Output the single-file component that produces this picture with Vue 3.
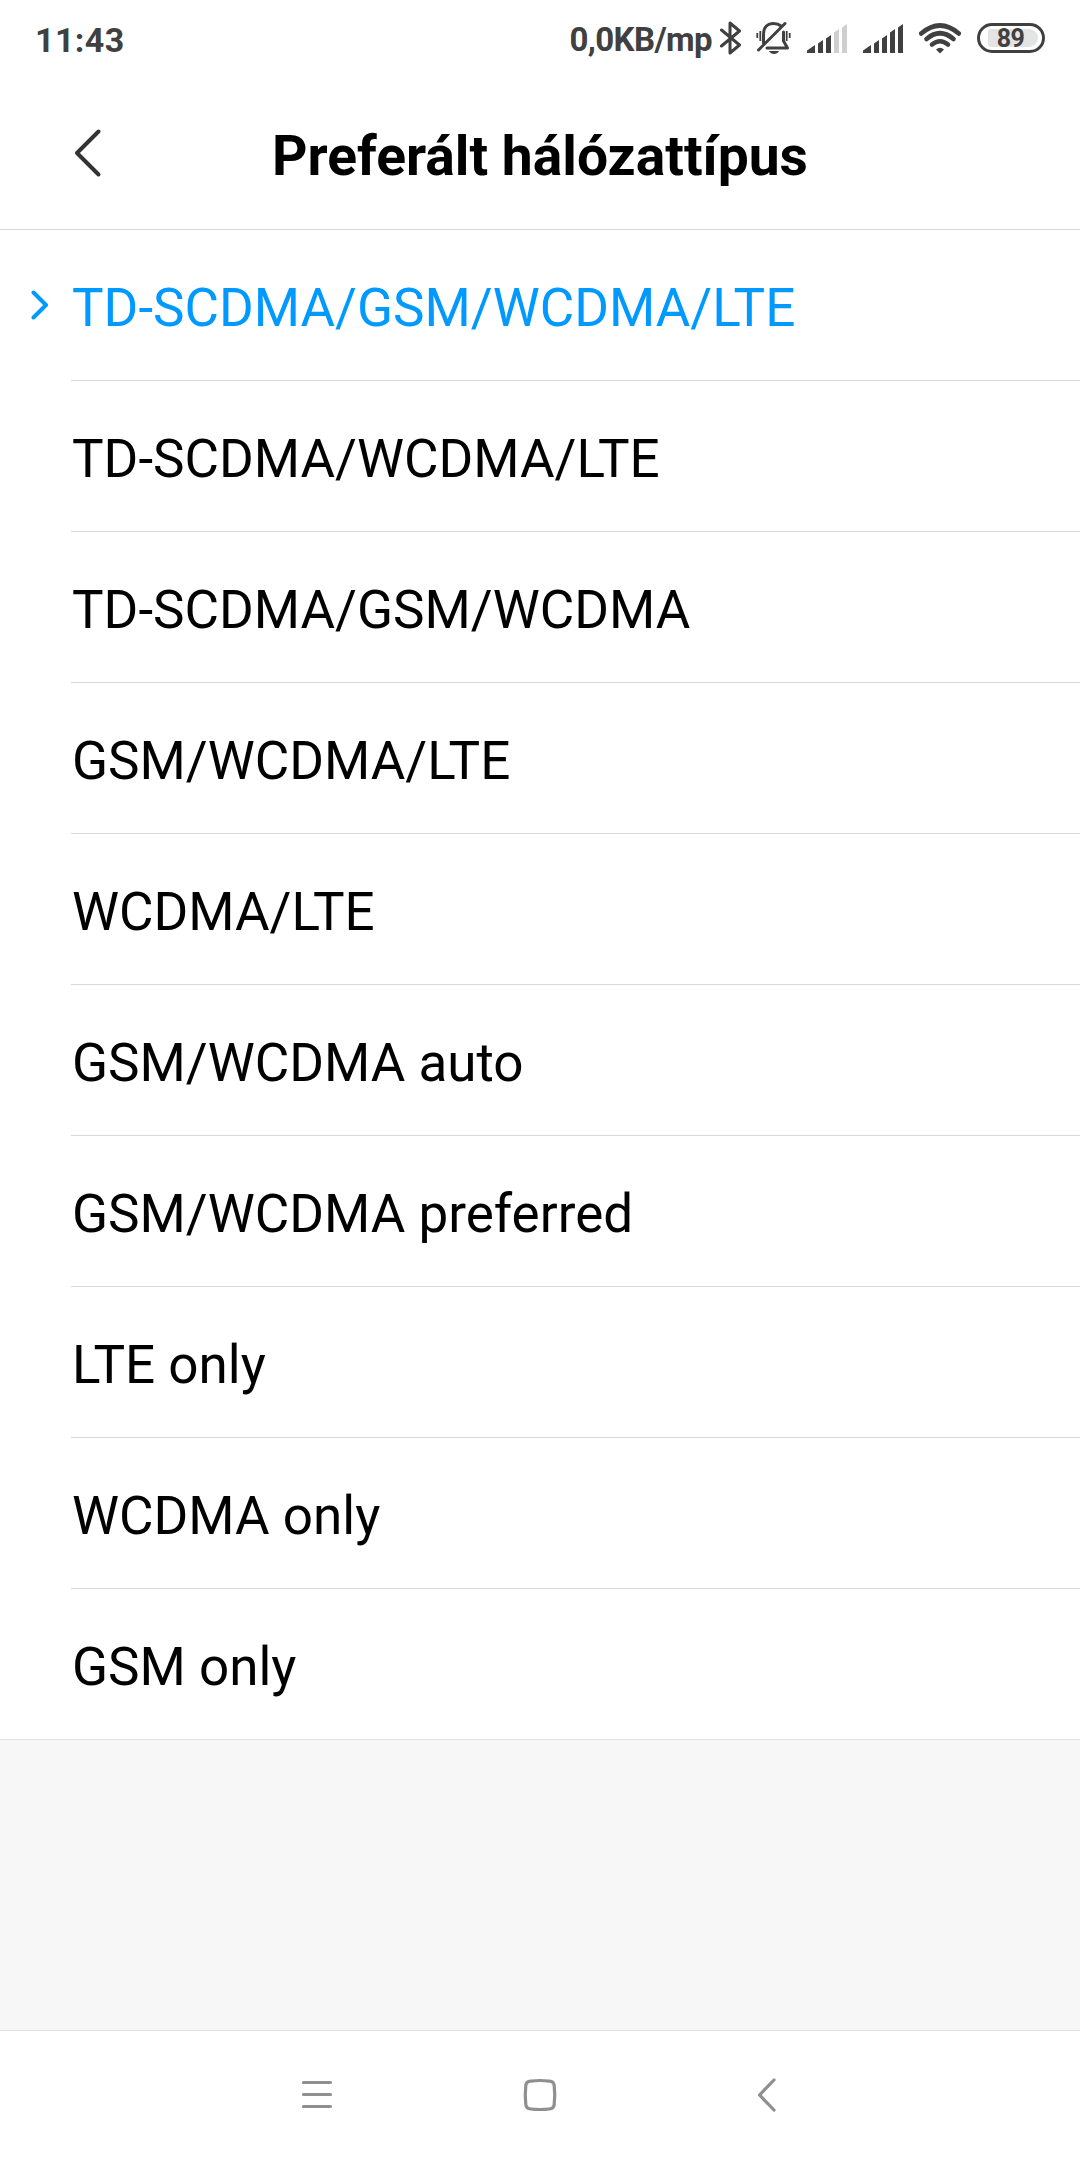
<script setup>
const options = [
  'TD-SCDMA/GSM/WCDMA/LTE',
  'TD-SCDMA/WCDMA/LTE',
  'TD-SCDMA/GSM/WCDMA',
  'GSM/WCDMA/LTE',
  'WCDMA/LTE',
  'GSM/WCDMA auto',
  'GSM/WCDMA preferred',
  'LTE only',
  'WCDMA only',
  'GSM only',
]
const selected = 0
const bars = [
  'M0 29V26.5L8 21V29Z',
  'M11 29V19.5L16 16V29Z',
  'M19 29V14.5L24 11V29Z',
  'M27 29V8.5L32 5V29Z',
  'M35 29V3.5L40 0V29Z',
]
const signals = [3, 5]
</script>

<template>
  <div class="screen">
    <div class="status">
      <span class="time">11:43</span>
      <div class="indicators">
        <span class="speed">0,0KB/mp</span>
        <svg class="bluetooth" width="22" height="34" viewBox="0 0 22 34">
          <path d="M1.5 9L19.500 24L10 32V2L19.500 10L1.5 25" />
        </svg>
        <svg class="bell" width="35" height="34" viewBox="0 0 35 34">
          <path d="M7.500 22V13C7.500 6 12 2.500 17.500 2.500C20.500 2.500 23 3.300 25 5" />
          <path d="M27.500 11V20L31.500 27H11" />
          <path d="M2.500 29L29 2.500" />
          <path class="thin" d="M1.300 12V17M4.300 10V20M30.700 10V20M33.700 12V17" />
          <path class="solid" d="M13 30H23Q21.500 33 18 33T13 30Z" />
        </svg>
        <svg v-for="(level, n) in signals" :key="n" class="signal" width="40" height="29" viewBox="0 0 40 29">
          <path v-for="(bar, i) in bars" :key="i" :d="bar" :class="{ off: i >= level }" />
        </svg>
        <svg class="wifi" width="42" height="31" viewBox="0 0 42 31">
          <path d="M2.200 10.500Q21 -5.500 39.800 10.500" />
          <path d="M7.500 16Q21 4.500 34.500 16" />
          <path d="M13 21.500Q21 15 29 21.500" />
          <path class="solid" d="M17 26.500Q21 23 25 26.500L21 30.500Z" />
        </svg>
        <div class="battery"><span class="charge">89</span></div>
      </div>
    </div>

    <header class="header">
      <svg class="back" width="28" height="50" viewBox="0 0 28 50">
        <path d="M24.500 3.500L3 25L24.500 46.500" />
      </svg>
      <h1>Preferált hálózattípus</h1>
    </header>

    <ul class="list">
      <li v-for="(option, i) in options" :key="option" :class="{ active: i === selected }">
        <div class="marker">
          <svg v-if="i === selected" width="18" height="30" viewBox="0 0 18 30">
            <path d="M2.500 2.500L15 15L2.500 27.500" />
          </svg>
        </div>
        <span class="label">{{ option }}</span>
      </li>
    </ul>

    <div class="filler"></div>

    <nav class="nav">
      <svg width="36" height="36" viewBox="0 0 36 36">
        <path d="M4.500 5.500H31.500M4.500 17.500H31.500M4.500 29.500H31.500" />
      </svg>
      <svg width="36" height="36" viewBox="0 0 36 36">
        <path d="M8.500 4.200Q18 2.800 27.500 4.200Q31.800 4.600 32.200 8.500Q33.300 18 32.200 27.500Q31.800 31.500 27.500 32Q18 33 8.500 32Q4.200 31.500 3.800 27.500Q2.700 18 3.800 8.500Q4.200 4.600 8.500 4.200Z" />
      </svg>
      <svg width="36" height="36" viewBox="0 0 36 36">
        <path d="M29 3L14.500 18L29 33" />
      </svg>
    </nav>
  </div>
</template>

<style>
body {
  margin: 0;
  background: #fff;
}
</style>

<style scoped>
.screen {
  display: flex;
  flex-direction: column;
  width: 1080px;
  height: 2160px;
  overflow: hidden;
  background: #fff;
  color: #000;
  font-family: Roboto, sans-serif;
}
svg {
  display: block;
  flex: none;
  fill: none;
  stroke-linecap: round;
  stroke-linejoin: round;
}
.status {
  display: flex;
  justify-content: space-between;
  align-items: center;
  box-sizing: border-box;
  height: 76px;
  padding: 0 35px 0 35px;
  color: #404040;
  font-weight: 700;
}
.time {
  font-size: 34px;
  line-height: 40px;
  letter-spacing: 0.4px;
  margin-top: 3px;
}
.indicators {
  display: flex;
  align-items: center;
  white-space: nowrap;
}
.speed {
  font-size: 33px;
  line-height: 40px;
  letter-spacing: -0.6px;
  margin: 3px 8px 0 0;
}
.bluetooth {
  stroke: #404040;
  stroke-width: 3;
  margin-right: 14px;
}
.bell {
  stroke: #404040;
  stroke-width: 3;
  margin-right: 16px;
}
.bell .thin {
  stroke-width: 1.8;
  stroke-linecap: butt;
}
.bell .solid,
.wifi .solid {
  fill: #404040;
  stroke: none;
}
.signal {
  fill: #404040;
  margin-right: 16px;
}
.signal .off {
  fill: #cfcfcf;
}
.wifi {
  stroke: #404040;
  stroke-width: 4.6;
  margin-right: 16px;
}
.battery {
  box-sizing: border-box;
  width: 68px;
  height: 30px;
  padding: 3px;
  border: 3px solid #404040;
  border-radius: 15px;
  display: flex;
  justify-content: center;
}
.charge {
  width: 50px;
  height: 18px;
  line-height: 20px;
  border-radius: 3px 9px 9px 3px;
  background: #e4e4e4;
  font-size: 25px;
  text-align: center;
  margin-left: 3px;
  text-indent: -4px;
  letter-spacing: -0.5px;
}
.header {
  display: grid;
  grid-template-columns: 72px 1fr 72px;
  align-items: center;
  height: 153px;
  border-bottom: 1px solid #d9d9d9;
}
.back {
  stroke: #333;
  stroke-width: 4;
  justify-self: end;
  margin-right: -30px;
}
.header h1 {
  margin: 7px 0 0;
  text-align: center;
  font-size: 55.2px;
  line-height: 65px;
  font-weight: 700;
}
.list {
  margin: 0;
  padding: 0;
  list-style: none;
}
.list li {
  display: grid;
  grid-template-columns: 71px 1fr;
  height: 151px;
}
.marker {
  display: flex;
  align-items: center;
  padding: 0 0 1px 31px;
}
.marker svg {
  stroke: #0099ff;
  stroke-width: 4;
}
.label {
  box-sizing: border-box;
  height: 151px;
  padding: 3px 0 0 1px;
  border-bottom: 1px solid #d9d9d9;
  font-size: 53px;
  line-height: 151px;
  white-space: nowrap;
}
.list li:last-child {
  border-bottom: 1px solid #e0e0e0;
  height: 150px;
}
.list li:last-child .label {
  height: 150px;
  border: 0;
}
.active .label {
  color: #0099ff;
}
.filler {
  flex: 1;
  background: #f7f7f7;
}
.nav {
  display: flex;
  justify-content: center;
  align-items: center;
  gap: 187px;
  box-sizing: border-box;
  height: 130px;
  padding-bottom: 2px;
  border-top: 1px solid #e0e0e0;
}
.nav svg {
  stroke: #8f8f8f;
  stroke-width: 3.2;
}
</style>
